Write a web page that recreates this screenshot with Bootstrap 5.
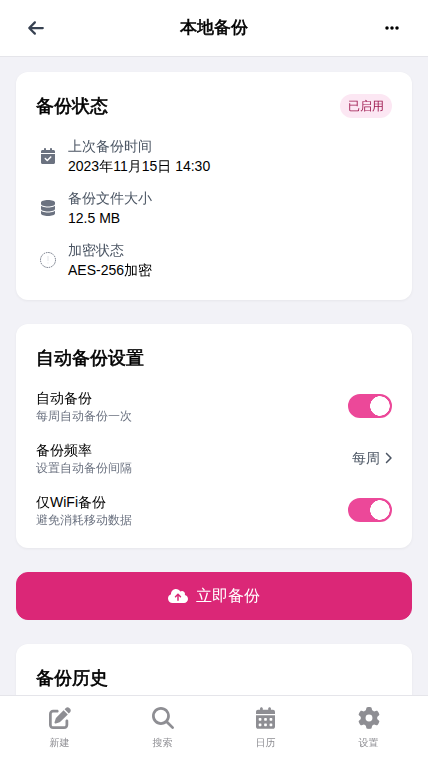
<!DOCTYPE html>
<html lang="zh-CN">
<head>
<meta charset="utf-8">
<meta name="viewport" content="width=device-width, initial-scale=1">
<title>本地备份</title>
<link href="https://cdn.jsdelivr.net/npm/bootstrap@5.3.0/dist/css/bootstrap.min.css" rel="stylesheet">
<style>
  body { font-family: "Liberation Sans", "Droid Sans Fallback", "WenQuanYi Zen Hei", "Noto Sans CJK SC", sans-serif; font-size: 14px; line-height: 20px; color: #000; background: #f2f2f7; }
  svg { display: block; fill: currentColor; flex-shrink: 0; }
  .app-header { height: 57px; border-bottom: 1px solid #e5e5ea; }
  .app-title { font-size: 17px; line-height: 26px; font-weight: 600; -webkit-text-stroke: .6px currentColor; }
  .icon-btn { width: 40px; height: 40px; padding: 0; color: #374151; }
  .app-main { scrollbar-width: none; }
  .app-main::-webkit-scrollbar { display: none; }
  .page-stack { padding: 15px 16px 16px; }
  .panel { border: 0; border-radius: 12px; padding: 20px; box-shadow: 0 1px 3px rgba(0, 0, 0, .05); }
  .panel-title { font-size: 18px; line-height: 28px; font-weight: 600; -webkit-text-stroke: .6px currentColor; }
  .state-pill { font-size: 12px; line-height: 16px; font-weight: 400; padding: 4px 8px; color: #9d174d; background: #fce7f3; }
  .stat-list { gap: 12px; }
  .stat-icon { width: 24px; color: #6b7280; }
  .stat-label, .choice { color: #4b5563; }
  .hint { font-size: 12px; line-height: 16px; color: #6b7280; }
  .switch-box .form-check-input { width: 44px; height: 24px; margin: 0; border: 2px solid #d1d5db; cursor: pointer;
    background-image: radial-gradient(circle closest-side, #fff 96%, transparent); background-size: 20px 20px; background-position: left center; background-color: #d1d5db; }
  .switch-box .form-check-input:checked { background-color: #ec4899; border-color: #ec4899; background-position: right center;
    background-image: radial-gradient(circle closest-side, #fff 96%, transparent); }
  .backup-btn { height: 48px; border-radius: 12px; font-size: 16px; line-height: 24px;
    --bs-btn-color: #fff; --bs-btn-bg: #db2777; --bs-btn-border-color: #db2777; --bs-btn-hover-color: #fff; --bs-btn-hover-bg: #be185d; --bs-btn-hover-border-color: #be185d; }
  .tab-bar { height: 65px; border-top: 1px solid #e5e5ea; }
  .tab-bar a { font-size: 10px; line-height: 16px; color: #8e8e93; padding-top: 11px; gap: 6px; }
</style>
<script src="https://cdn.jsdelivr.net/npm/bootstrap@5.3.0/dist/js/bootstrap.bundle.min.js" defer></script>
</head>
<body class="d-flex flex-column vh-100">

<header class="app-header bg-white d-flex align-items-center justify-content-between px-3 flex-shrink-0">
  <button type="button" class="btn icon-btn d-flex align-items-center justify-content-center border-0" aria-label="返回">
    <svg width="16" height="18" viewBox="0 0 448 512"><path d="M9.4 233.4c-12.5 12.5-12.5 32.8 0 45.3l160 160c12.5 12.5 32.8 12.5 45.3 0s12.5-32.8 0-45.3L109.2 288 416 288c17.7 0 32-14.3 32-32s-14.3-32-32-32l-306.7 0L214.6 118.6c12.5-12.5 12.5-32.8 0-45.3s-32.8-12.5-45.3 0l-160 160z"/></svg>
  </button>
  <h1 class="app-title mb-0">本地备份</h1>
  <button type="button" class="btn icon-btn d-flex align-items-center justify-content-center border-0 text-black" aria-label="更多">
    <svg width="14" height="16" viewBox="0 0 448 512"><path d="M8 256a56 56 0 1 1 112 0A56 56 0 1 1 8 256zm160 0a56 56 0 1 1 112 0 56 56 0 1 1 -112 0zm216-56a56 56 0 1 1 0 112 56 56 0 1 1 0-112z"/></svg>
  </button>
</header>

<main class="app-main flex-grow-1 overflow-auto">
  <div class="page-stack d-grid gap-4">
    <section class="card panel gap-3">
      <div class="d-flex align-items-center justify-content-between">
        <h2 class="panel-title mb-0">备份状态</h2>
        <span class="badge rounded-pill state-pill">已启用</span>
      </div>
      <div class="stat-list d-flex flex-column">
        <div class="d-flex align-items-center gap-2">
          <span class="stat-icon d-flex justify-content-center">
            <svg width="14" height="16" viewBox="0 0 448 512"><path d="M128 0c17.7 0 32 14.3 32 32V64H288V32c0-17.7 14.3-32 32-32s32 14.3 32 32V64h48c26.5 0 48 21.5 48 48v48H0V112C0 85.5 21.5 64 48 64H96V32c0-17.7 14.3-32 32-32zM0 192H448V464c0 26.5-21.5 48-48 48H48c-26.5 0-48-21.5-48-48V192zM329 305c9.4-9.4 9.4-24.6 0-33.9s-24.6-9.4-33.9 0l-95 95-47-47c-9.4-9.4-24.6-9.4-33.9 0s-9.4 24.6 0 33.9l64 64c9.4 9.4 24.6 9.4 33.9 0L329 305z"/></svg>
          </span>
          <div><div class="stat-label">上次备份时间</div><div>2023年11月15日 14:30</div></div>
        </div>
        <div class="d-flex align-items-center gap-2">
          <span class="stat-icon d-flex justify-content-center">
            <svg width="14" height="16" viewBox="0 0 448 512"><path d="M448 80v48c0 44.2-100.3 80-224 80S0 172.2 0 128V80C0 35.8 100.3 0 224 0S448 35.8 448 80zM393.2 214.7c20.8-7.4 39.9-16.9 54.8-28.6V288c0 44.2-100.3 80-224 80S0 332.2 0 288V186.1c14.9 11.8 34 21.2 54.8 28.6C99.7 230.7 159.5 240 224 240s124.3-9.3 169.2-25.3zM0 346.1c14.9 11.8 34 21.2 54.8 28.6C99.7 390.7 159.5 400 224 400s124.3-9.3 169.2-25.3c20.8-7.4 39.9-16.9 54.8-28.6V432c0 44.2-100.3 80-224 80S0 476.2 0 432V346.1z"/></svg>
          </span>
          <div><div class="stat-label">备份文件大小</div><div>12.5 MB</div></div>
        </div>
        <div class="d-flex align-items-center gap-2">
          <span class="stat-icon d-flex justify-content-center">
            <svg width="16" height="16" viewBox="0 0 16 16"><circle cx="8" cy="8" r="7.5" fill="none" stroke="currentColor" stroke-width="1" stroke-dasharray="1.5 .856"/><path d="M7.5 4h1v5h-1zM7.5 10.5h1v1h-1z" opacity=".2"/></svg>
          </span>
          <div><div class="stat-label">加密状态</div><div>AES-256加密</div></div>
        </div>
      </div>
    </section>

    <section class="card panel gap-3">
      <h2 class="panel-title mb-0">自动备份设置</h2>
      <div class="d-flex align-items-center justify-content-between switch-box form-switch p-0">
        <label for="auto-backup"><span class="d-block">自动备份</span><span class="d-block hint">每周自动备份一次</span></label>
        <input class="form-check-input" type="checkbox" role="switch" id="auto-backup" checked>
      </div>
      <div class="d-flex align-items-center justify-content-between">
        <div><div>备份频率</div><div class="hint">设置自动备份间隔</div></div>
        <a href="#" class="choice d-flex align-items-center gap-1 text-decoration-none">每周
          <svg width="8" height="12" viewBox="0 0 320 512"><path d="M310.6 233.4c12.5 12.5 12.5 32.8 0 45.3l-192 192c-12.5 12.5-32.8 12.5-45.3 0s-12.5-32.8 0-45.3L242.7 256 73.4 86.6c-12.5-12.5-12.5-32.8 0-45.3s32.8-12.5 45.3 0l192 192z"/></svg>
        </a>
      </div>
      <div class="d-flex align-items-center justify-content-between switch-box form-switch p-0">
        <label for="wifi-only"><span class="d-block">仅WiFi备份</span><span class="d-block hint">避免消耗移动数据</span></label>
        <input class="form-check-input" type="checkbox" role="switch" id="wifi-only" checked>
      </div>
    </section>

    <button type="button" class="btn backup-btn d-flex align-items-center justify-content-center gap-2">
      <svg width="20" height="16" viewBox="0 0 640 512"><path d="M144 480C64.5 480 0 415.5 0 336c0-62.8 40.2-116.2 96.2-135.9c-.1-2.7-.2-5.4-.2-8.1c0-88.4 71.6-160 160-160c59.3 0 111 32.2 138.7 80.2C409.9 102 428.3 96 448 96c53 0 96 43 96 96c0 12.2-2.3 23.8-6.4 34.6C596 238.4 640 290.1 640 352c0 70.7-57.3 128-128 128H144zm79-217c-9.4 9.4-9.4 24.6 0 33.9s24.6 9.4 33.9 0l39-39V392c0 13.3 10.7 24 24 24s24-10.7 24-24V257.9l39 39c9.4 9.4 24.6 9.4 33.9 0s9.4-24.6 0-33.9l-80-80c-9.4-9.4-24.6-9.4-33.9 0l-80 80z"/></svg>
      立即备份
    </button>

    <section class="card panel">
      <h2 class="panel-title mb-0">备份历史</h2>
    </section>
  </div>
</main>

<nav class="tab-bar bg-white d-flex px-2 flex-shrink-0" aria-label="主导航">
  <a href="#" class="col d-flex flex-column align-items-center text-decoration-none">
    <svg width="22" height="22" viewBox="0 0 512 512"><path d="M471.6 21.7c-21.9-21.9-57.3-21.9-79.2 0L362.3 51.7l97.9 97.9 30.1-30.1c21.9-21.9 21.9-57.3 0-79.2L471.6 21.7zm-299.2 220c-6.1 6.1-10.8 13.6-13.5 21.9l-29.6 88.8c-2.9 8.6-.6 18.1 5.8 24.6s15.9 8.7 24.6 5.8l88.8-29.6c8.2-2.7 15.7-7.4 21.9-13.5L437.7 172.3 339.7 74.3 172.4 241.7zM96 64C43 64 0 107 0 160V416c0 53 43 96 96 96H352c53 0 96-43 96-96V320c0-17.7-14.3-32-32-32s-32 14.3-32 32v96c0 17.7-14.3 32-32 32H96c-17.7 0-32-14.3-32-32V160c0-17.7 14.3-32 32-32h96c17.7 0 32-14.3 32-32s-14.3-32-32-32H96z"/></svg>
    <span>新建</span>
  </a>
  <a href="#" class="col d-flex flex-column align-items-center text-decoration-none">
    <svg width="22" height="22" viewBox="0 0 512 512"><path d="M416 208c0 45.9-14.9 88.3-40 122.7L502.6 457.4c12.5 12.5 12.5 32.8 0 45.3s-32.8 12.5-45.3 0L330.7 376c-34.4 25.2-76.8 40-122.7 40C93.1 416 0 322.9 0 208S93.1 0 208 0S416 93.1 416 208zM208 352a144 144 0 1 0 0-288 144 144 0 1 0 0 288z"/></svg>
    <span>搜索</span>
  </a>
  <a href="#" class="col d-flex flex-column align-items-center text-decoration-none">
    <svg width="19" height="22" viewBox="0 0 448 512"><path fill-rule="evenodd" d="M128 0c17.7 0 32 14.3 32 32V64H288V32c0-17.7 14.3-32 32-32s32 14.3 32 32V64h48c26.5 0 48 21.5 48 48v48H0V112C0 85.5 21.5 64 48 64H96V32c0-17.7 14.3-32 32-32zM0 192H448V464c0 26.5-21.5 48-48 48H48c-26.5 0-48-21.5-48-48V192zM80 256h32q16 0 16 16v32q0 16-16 16H80q-16 0-16-16V272q0-16 16-16zM208 256h32q16 0 16 16v32q0 16-16 16H208q-16 0-16-16V272q0-16 16-16zM336 256h32q16 0 16 16v32q0 16-16 16H336q-16 0-16-16V272q0-16 16-16zM80 384h32q16 0 16 16v32q0 16-16 16H80q-16 0-16-16V400q0-16 16-16zM208 384h32q16 0 16 16v32q0 16-16 16H208q-16 0-16-16V400q0-16 16-16zM336 384h32q16 0 16 16v32q0 16-16 16H336q-16 0-16-16V400q0-16 16-16z"/></svg>
    <span>日历</span>
  </a>
  <a href="#" class="col d-flex flex-column align-items-center text-decoration-none">
    <svg width="22" height="22" viewBox="0 0 512 512"><path d="M495.9 166.6c3.2 8.7 .5 18.4-6.4 24.6l-43.3 39.4c1.1 8.3 1.7 16.8 1.7 25.4s-.6 17.1-1.7 25.4l43.3 39.4c6.9 6.2 9.6 15.9 6.4 24.6c-4.4 11.9-9.7 23.3-15.8 34.3l-4.7 8.1c-6.6 11-14 21.4-22.1 31.2c-5.9 7.2-15.7 9.6-24.5 6.8l-55.7-17.7c-13.4 10.3-28.2 18.9-44 25.4l-12.5 57.1c-2 9.1-9 16.3-18.2 17.8c-13.8 2.3-28 3.5-42.5 3.5s-28.7-1.2-42.5-3.5c-9.2-1.5-16.2-8.7-18.2-17.8l-12.5-57.1c-15.8-6.5-30.6-15.1-44-25.4L83.1 425.9c-8.8 2.8-18.6 .3-24.5-6.8c-8.1-9.8-15.5-20.2-22.1-31.2l-4.7-8.1c-6.1-11-11.4-22.4-15.8-34.3c-3.2-8.7-.5-18.4 6.4-24.6l43.3-39.4C64.6 273.1 64 264.6 64 256s.6-17.1 1.7-25.4L22.4 191.2c-6.9-6.2-9.6-15.9-6.4-24.6c4.4-11.9 9.7-23.3 15.8-34.3l4.7-8.1c6.6-11 14-21.4 22.1-31.2c5.9-7.2 15.7-9.6 24.5-6.8l55.7 17.7c13.4-10.3 28.2-18.9 44-25.4l12.5-57.1c2-9.1 9-16.3 18.2-17.8C227.3 1.2 241.5 0 256 0s28.7 1.2 42.5 3.5c9.2 1.5 16.2 8.7 18.2 17.8l12.5 57.1c15.8 6.5 30.6 15.1 44 25.4l55.7-17.7c8.8-2.8 18.6-.3 24.5 6.8c8.1 9.8 15.5 20.2 22.1 31.2l4.7 8.1c6.1 11 11.4 22.4 15.8 34.3zM256 336a80 80 0 1 0 0-160 80 80 0 1 0 0 160z"/></svg>
    <span>设置</span>
  </a>
</nav>
</body>
</html>
